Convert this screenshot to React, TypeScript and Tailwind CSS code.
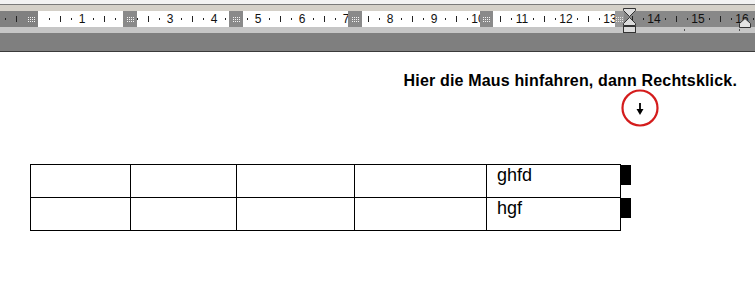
import React from "react";

const CM = 44;
const ORIGIN = 38;

// little dotted grip used by the column markers on the ruler
const Grip = ({ color = "#f4f4f4" }: { color?: string }) => (
  <svg width="7" height="5" viewBox="0 0 7 5">
    {[0, 2, 4].map((y) =>
      [0, 2, 4, 6].map((x) => (
        <rect key={`${x}-${y}`} x={x} y={y} width="1" height="1" fill={color} />
      ))
    )}
  </svg>
);

const ColumnMarker = ({ left, width }: { left: number; width: number }) => (
  <div
    className="absolute top-0 h-full bg-[#8a8a8a] flex items-center justify-center"
    style={{ left, width }}
  >
    <Grip />
  </div>
);

const Ruler: React.FC = () => {
  const units = Array.from({ length: 19 }, (_, i) => i - 1);

  return (
    <div className="relative h-[16px] flex">
      <div className="w-[38px] bg-[#808080]" />
      <div className="flex-1 bg-white" />
      <div className="w-[140px] bg-[#888888]" />

      {units.map((n) => {
        const c = ORIGIN + n * CM;
        return (
          <React.Fragment key={n}>
            {n >= 1 && n <= 16 && (
              <span
                className="absolute top-0 h-full flex items-center -translate-x-1/2 text-[12px] leading-none text-[#111]"
                style={{ left: c }}
              >
                {n}
              </span>
            )}
            <div className="absolute top-[7px] w-px h-[2px] bg-[#222]" style={{ left: c + 11 }} />
            <div className="absolute top-[5px] w-px h-[6px] bg-[#222]" style={{ left: c + 22 }} />
            <div className="absolute top-[7px] w-px h-[2px] bg-[#222]" style={{ left: c + 33 }} />
          </React.Fragment>
        );
      })}

      <div className="absolute top-0 left-[27px] h-full w-[8px] bg-[#808080] flex items-center justify-center">
        <Grip />
      </div>
      <ColumnMarker left={123} width={14} />
      <ColumnMarker left={229} width={14} />
      <ColumnMarker left={348} width={14} />
      <ColumnMarker left={480} width={13} />
      <div className="absolute top-0 left-[615px] h-full w-[9px] bg-[#9a9a9a] flex items-center justify-center">
        <Grip color="#e6e6e6" />
      </div>
    </div>
  );
};

const Header: React.FC = () => (
  <div className="relative">
    <div className="h-[4px] bg-[#f2f2f2]" />
    <div className="h-px bg-[#7a7a7a]" />
    <div className="h-[6px] bg-[#d4d0c8]" />
    <Ruler />
    <div className="relative h-[6px] bg-[#c6c6c6]">
      <div className="absolute left-[684px] top-[2px] w-px h-[2px] bg-[#555]" />
      <div className="absolute left-[739px] top-[2px] w-px h-[2px] bg-[#555]" />
    </div>
    <div className="h-[18px] bg-[#7f7f7f]" />
    <div className="h-px bg-[#3a3a3a]" />

    {/* indent markers sit over the ruler */}
    <svg className="absolute left-[623px] top-[8px]" width="13" height="26" viewBox="0 0 13 26">
      <polygon points="0.5,0.5 12.5,0.5 12.5,2.5 6.5,8.5 0.5,2.5" fill="#dcdcdc" stroke="#333" />
      <polygon points="6.5,9.5 12.5,15.5 12.5,17.5 0.5,17.5 0.5,15.5" fill="#dcdcdc" stroke="#333" />
      <rect x="0.5" y="18.5" width="12" height="6" fill="#dcdcdc" stroke="#333" />
    </svg>
    <svg className="absolute left-[739px] top-[18px]" width="13" height="11" viewBox="0 0 13 11">
      <polygon points="6,0.5 11.5,5.5 11.5,9.5 0.5,9.5 0.5,5.5" fill="#e4e4e4" stroke="#333" />
    </svg>
  </div>
);

const cols = [100, 106, 118, 132, 134];
const rows = [["", "", "", "", "ghfd"], ["", "", "", "", "hgf"]];

const App: React.FC = () => {
  return (
    <div className="w-[755px] h-[294px] overflow-hidden bg-white font-['Liberation_Sans',Arial,sans-serif] text-black">
      <Header />

      <div className="mt-[20px] flex justify-end pr-[18px]">
        <p className="text-[16px] leading-[18px] font-bold tracking-[0.17px]">
          Hier die Maus hinfahren, dann Rechtsklick.
        </p>
      </div>

      <div className="flex justify-end pr-[95px] -mt-[2px]">
        <svg width="40" height="40" viewBox="0 0 40 40">
          <circle cx="20" cy="20" r="17.5" fill="none" stroke="#d41c1c" strokeWidth="2.2" />
          <line x1="20" y1="15" x2="20" y2="23" stroke="#000" strokeWidth="1.8" />
          <polygon points="16.5,21 23.5,21 20,27" fill="#000" />
        </svg>
      </div>

      <div className="mt-[36px] ml-[30px] flex">
        <div className="grid grid-cols-[100px_106px_118px_132px_134px] border-l border-t border-black">
          {rows.map((r, i) =>
            r.map((text, j) => (
              <div
                key={`${i}-${j}`}
                className="h-[33px] border-r border-b border-black pl-[10px] text-[18px] leading-[20px]"
                style={{ width: cols[j] }}
              >
                {text}
              </div>
            ))
          )}
        </div>
        <div className="flex flex-col pt-px">
          <div className="h-[33px]">
            <div className="w-[10px] h-[20px] bg-black" />
          </div>
          <div className="h-[33px]">
            <div className="w-[10px] h-[20px] bg-black" />
          </div>
        </div>
      </div>
    </div>
  );
};

export default App;
